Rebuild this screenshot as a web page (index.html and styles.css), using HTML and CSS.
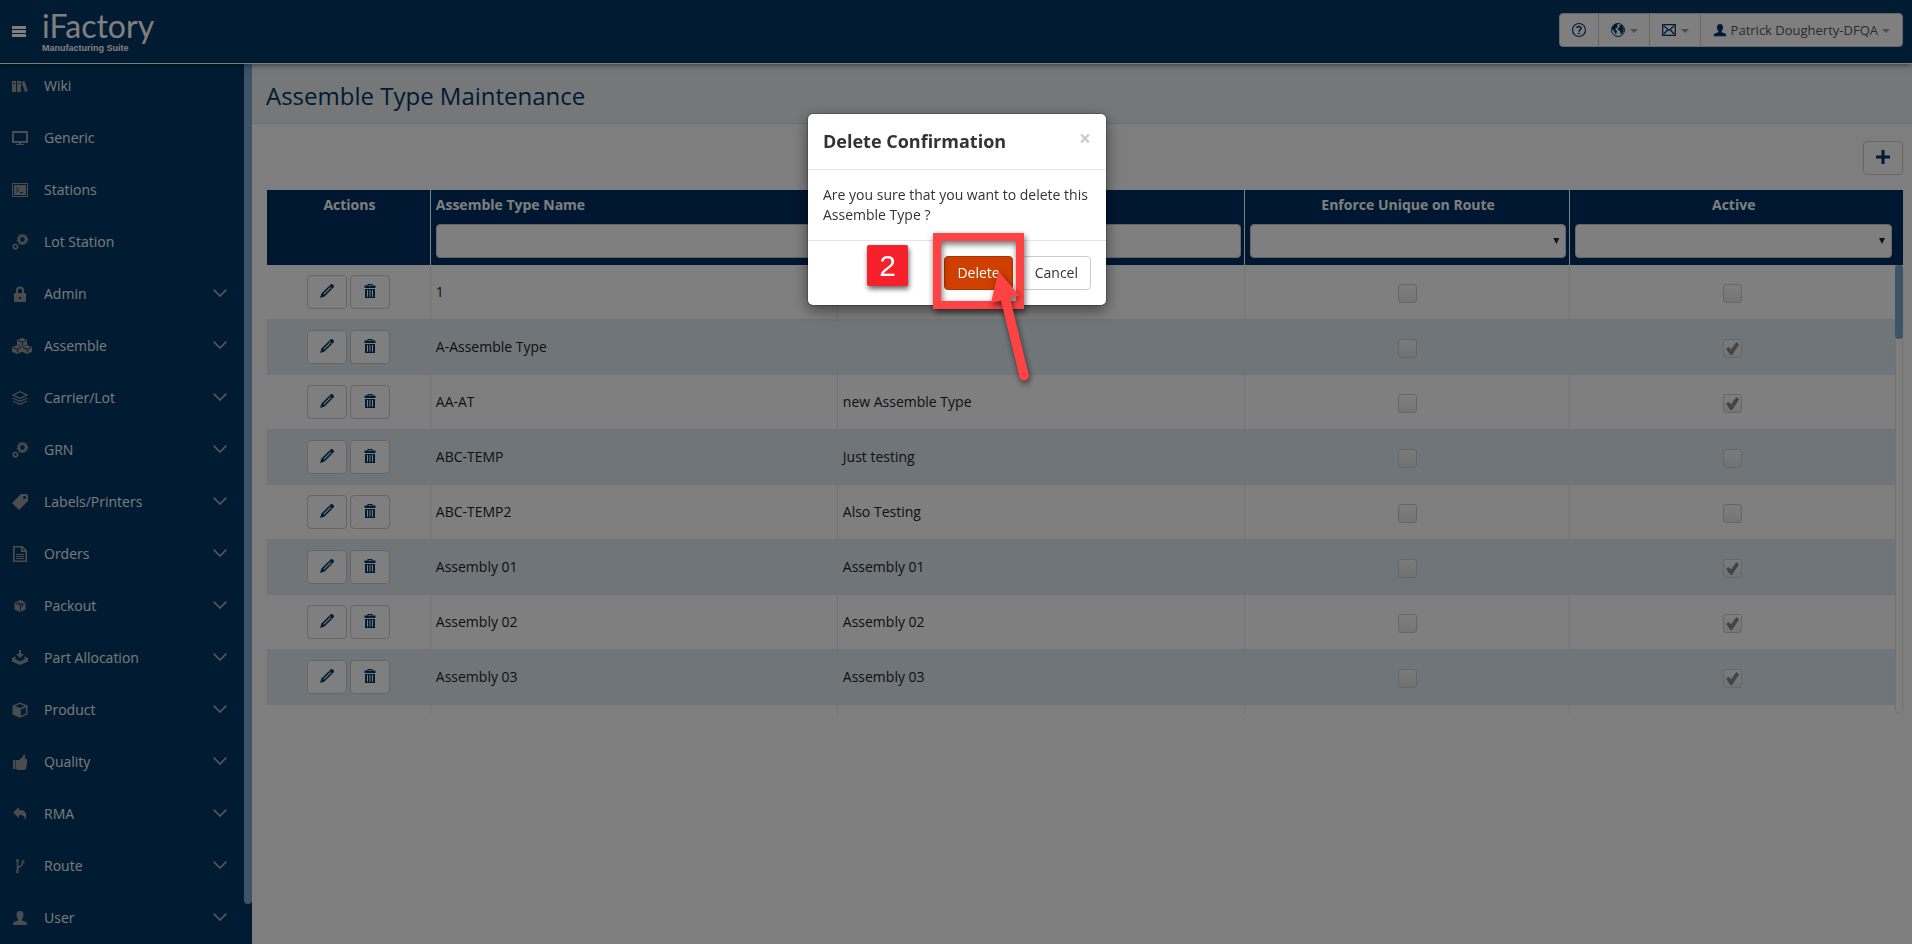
FILE: index.html
```html
<!DOCTYPE html>
<html lang="en">
<head>
<meta charset="utf-8">
<title>Assemble Type Maintenance</title>
<link rel="stylesheet" href="styles.css">
</head>
<body>
<svg class="sprite" aria-hidden="true">
  <symbol id="books" viewBox="0 0 16 16"><path d="M0 3h4v11H0zM5 3h4v11H5zM9.500 4l3-1 3.500 10-3 1z"/><path class="cut" d="M1 5h2v1H1zM6 5h2v1H6z"/></symbol>
  <symbol id="monitor" viewBox="0 0 16 16"><path d="M0 1h16v12H0zM2 3v8h12V3zM7 13h2v1h3v1H4v-1h3z" fill-rule="evenodd"/></symbol>
  <symbol id="terminal" viewBox="0 0 16 16"><path d="M0 1h16v14H0zM1 2v12h14V2zM2 3h12v10H2zM4 5v1l2 2-2 2v1l3-3zM8 10v1h3v-1z" fill-rule="evenodd"/></symbol>
  <symbol id="gears" viewBox="0 0 16 16"><circle cx="10.500" cy="5.500" r="3.500" fill="none" stroke="currentColor" stroke-width="2.200"/><circle cx="10.500" cy="5.500" r="5" fill="none" stroke="currentColor" stroke-width="1.300" stroke-dasharray="1.600 1.030"/><circle cx="3.400" cy="12.600" r="2" fill="none" stroke="currentColor" stroke-width="1.300"/><circle cx="3.400" cy="12.600" r="2.900" fill="none" stroke="currentColor" stroke-width="1" stroke-dasharray="1.200 1.070"/></symbol>
  <symbol id="lock" viewBox="0 0 16 16"><path d="M2 7h2V4.500a4 4 0 0 1 8 0V7h2v9H2zM6 7h4V4.500a2 2 0 0 0-4 0zM7 11v2h2v-2z" fill-rule="evenodd"/></symbol>
  <symbol id="cubes" viewBox="0 0 20 16"><path d="M10 0l5 2v4.500l-5 2.200-5-2.200V2zM5 7l5 2.300v4.400L5 16l-5-2.300V9.300zM15 7l5 2.300v4.400L15 16l-5-2.300V9.300z"/><path class="line" d="M6 2.500l4 1.700 4-1.700M10.500 7.300V4.500M1 9.600l4 1.800 4-1.800M5.500 14.500v-3M11 9.600l4 1.800 4-1.800M15.500 14.500v-3"/></symbol>
  <symbol id="layers" viewBox="0 0 16 16"><path d="M1 5l7-3.300L15 5 8 8.400zM1 8l7 3.400L15 8M1 11l7 3.400L15 11" fill="none" stroke="currentColor" stroke-width="1.200"/></symbol>
  <symbol id="tag" viewBox="0 0 16 16"><path d="M9 0h5a2 2 0 0 1 2 2v5l-9 9-7-7zM12.500 2a1.500 1.500 0 1 0 0 3 1.500 1.500 0 0 0 0-3z" fill-rule="evenodd"/></symbol>
  <symbol id="doc" viewBox="0 0 16 16"><path d="M1.800 .8h8.400l4 4v10.400H1.800zM9.800 1v4.200H14" fill="none" stroke="currentColor" stroke-width="1.600"/><path d="M4 8h8v1H4zM4 10h8v1H4zM4 12h8v1H4z"/></symbol>
  <symbol id="package" viewBox="0 0 16 16"><path d="M8 2l5.500 2.500v7L8 14l-5.500-2.500v-7z"/><path class="line" d="M3 5l5 2.300L13.500 5M8.500 7v6M5 3.800l5.500 2.500V9"/></symbol>
  <symbol id="inbox" viewBox="0 0 16 16"><path d="M7 0h2v4h3L8 8 4 4h3z"/><path d="M4 6.500L0 8v3.500L8 15l8-3.500V8l-4-1.500v1.300l1.500 1L8 11.500 2.500 8.800 4 7.800z"/></symbol>
  <symbol id="cube" viewBox="0 0 16 16"><path d="M8 .5l7.500 3v9L8 15.700.5 12.500v-9zM8 2L3 4l5 2 5-2zM8.800 7.500v6.400l5.200-2.300V5.300z" fill-rule="evenodd"/></symbol>
  <symbol id="thumb" viewBox="0 0 16 16"><path d="M1 6h2v9H1zM3.500 6H7l3.500-3L12 0l1 1v4h2v4l-1 6-2 1H6l-2.500-1z"/></symbol>
  <symbol id="reply" viewBox="0 0 16 16"><path d="M7 1v3c6 0 9 3 6 11 .5-5-2-6-6-6v3L1 6.500z"/></symbol>
  <symbol id="fork" viewBox="0 0 16 16"><path d="M5.500 3.500v9M5.500 11c0-3 5-2 5-6" fill="none" stroke="currentColor" stroke-width="1.500"/><path d="M4.500 1.700h2v2h-2zM4.500 12.500h2v2h-2zM10 2.700h2v2h-2z" fill="none" stroke="currentColor"/></symbol>
  <symbol id="person" viewBox="0 0 16 16"><path d="M8 1c2.500 0 3.500 1.600 3.500 4 0 2-1 3-1.500 4v1.500l4 1.500c1 .5 1 1.500 1 3H1c0-1.500 0-2.500 1-3l4-1.500V9c-.5-1-1.500-2-1.500-4 0-2.400 1-4 3.500-4z"/></symbol>
  <symbol id="down" viewBox="0 0 14 8"><path d="M.7 .7L7 7 13.300 .7" fill="none" stroke="currentColor" stroke-width="1.700"/></symbol>
  <symbol id="help" viewBox="0 0 16 16"><circle cx="8" cy="8" r="6.500" fill="none" stroke="currentColor" stroke-width="1.200"/><path d="M5.700 6C6 3.900 10.300 4 10 6.500 9.700 8 8 7.700 8 9.700" fill="none" stroke="currentColor" stroke-width="1.500"/><path d="M7.200 10.700h1.600v1.600H7.200z"/></symbol>
  <symbol id="globe" viewBox="0 0 16 16"><circle cx="8" cy="8" r="6.500" fill="none" stroke="currentColor" stroke-width="1"/><path d="M2 5l3-3 3-.5L7 4l1 1-3 2 2 2-1 4-2-4-2-2zM9 3l3 0 2 4-1 1 1 1-3 4-1-4-2-1V6l2-1z"/></symbol>
  <symbol id="mail" viewBox="0 0 16 16"><path d="M1.700 2.700h12.600v10.600H1.700zM3 4l5 4.500L13 4M3 12l3.500-4M13 12L9.500 8" fill="none" stroke="currentColor" stroke-width="1.300"/></symbol>
  <symbol id="plus" viewBox="0 0 16 16"><path d="M6.500 1h3v5.500H15v3H9.500V15h-3V9.500H1v-3h5.500z"/></symbol>
  <symbol id="pencil" viewBox="0 0 14 14"><path d="M11 0c2 0 3 1 3 3L4.500 12.500 0 14l1.500-4.500z"/><path d="M3.700 10.300l6.500-6.500" fill="none" stroke="#fff" stroke-width="1.100"/><path d="M9.200 2l2.800 2.800" fill="none" stroke="#fff" stroke-width=".6"/></symbol>
  <symbol id="trash" viewBox="0 0 14 14"><path d="M4.500 0h5v1.500h3V4h-11V1.500h3zM5.500 1v.7h3V1zM2 5h10v9H2zM4 6v6.700h1V6zM6.500 6v6.700h1V6zM9 6v6.700h1V6z" fill-rule="evenodd"/></symbol>
</svg>

<header class="topbar">
  <button class="burger" aria-label="Toggle menu"><span></span><span></span><span></span></button>
  <a class="logo" href="#"><span class="logo-name">iFactory</span><span class="logo-sub">Manufacturing Suite</span></a>
  <div class="tools">
    <button aria-label="Help"><svg class="icon"><use href="#help"/></svg></button>
    <button aria-label="Language"><svg class="icon"><use href="#globe"/></svg><i class="caret"></i></button>
    <button aria-label="Messages"><svg class="icon"><use href="#mail"/></svg><i class="caret"></i></button>
    <button class="account"><svg class="icon"><use href="#person"/></svg><span>Patrick Dougherty-DFQA</span><i class="caret"></i></button>
  </div>
</header>

<div class="shell">
  <nav class="sidebar">
    <ul class="menu">
      <li><a href="#"><svg class="icon"><use href="#books"/></svg>Wiki</a></li>
      <li><a href="#"><svg class="icon"><use href="#monitor"/></svg>Generic</a></li>
      <li><a href="#"><svg class="icon"><use href="#terminal"/></svg>Stations</a></li>
      <li><a href="#"><svg class="icon"><use href="#gears"/></svg>Lot Station</a></li>
      <li><a href="#"><svg class="icon"><use href="#lock"/></svg>Admin<svg class="down"><use href="#down"/></svg></a></li>
      <li><a href="#"><svg class="icon wide"><use href="#cubes"/></svg>Assemble<svg class="down"><use href="#down"/></svg></a></li>
      <li><a href="#"><svg class="icon"><use href="#layers"/></svg>Carrier/Lot<svg class="down"><use href="#down"/></svg></a></li>
      <li><a href="#"><svg class="icon"><use href="#gears"/></svg>GRN<svg class="down"><use href="#down"/></svg></a></li>
      <li><a href="#"><svg class="icon"><use href="#tag"/></svg>Labels/Printers<svg class="down"><use href="#down"/></svg></a></li>
      <li><a href="#"><svg class="icon"><use href="#doc"/></svg>Orders<svg class="down"><use href="#down"/></svg></a></li>
      <li><a href="#"><svg class="icon"><use href="#package"/></svg>Packout<svg class="down"><use href="#down"/></svg></a></li>
      <li><a href="#"><svg class="icon"><use href="#inbox"/></svg>Part Allocation<svg class="down"><use href="#down"/></svg></a></li>
      <li><a href="#"><svg class="icon"><use href="#cube"/></svg>Product<svg class="down"><use href="#down"/></svg></a></li>
      <li><a href="#"><svg class="icon"><use href="#thumb"/></svg>Quality<svg class="down"><use href="#down"/></svg></a></li>
      <li><a href="#"><svg class="icon"><use href="#reply"/></svg>RMA<svg class="down"><use href="#down"/></svg></a></li>
      <li><a href="#"><svg class="icon"><use href="#fork"/></svg>Route<svg class="down"><use href="#down"/></svg></a></li>
      <li><a href="#"><svg class="icon"><use href="#person"/></svg>User<svg class="down"><use href="#down"/></svg></a></li>
    </ul>
    <div class="side-scroll"><div class="side-thumb"></div></div>
  </nav>

  <main class="content">
    <h1 class="page-title">Assemble Type Maintenance</h1>
    <div class="panel">
      <div class="actions-bar"><button class="btn square" aria-label="Add"><svg class="icon"><use href="#plus"/></svg></button></div>
      <div class="grid-head">
        <table class="grid">
          <colgroup><col class="c-act"><col class="c-text"><col class="c-text"><col class="c-flag"><col class="c-flag"></colgroup>
          <thead>
            <tr>
              <th class="center">Actions</th>
              <th><label for="f-name">Assemble Type Name</label><input class="filter" id="f-name" type="text"></th>
              <th><label for="f-desc"></label><input class="filter" id="f-desc" type="text" aria-label="Description"></th>
              <th class="center"><label for="f-unique">Enforce Unique on Route</label><span class="pick"><select class="filter" id="f-unique"><option></option></select></span></th>
              <th class="center"><label for="f-active">Active</label><span class="pick"><select class="filter" id="f-active"><option></option></select></span></th>
            </tr>
          </thead>
        </table>
      </div>
      <div class="grid-body">
        <div class="grid-view">
        <table class="grid">
          <colgroup><col class="c-act"><col class="c-text"><col class="c-text"><col class="c-flag"><col class="c-flag"></colgroup>
          <tbody id="rows"></tbody>
        </table>
        </div>
        <div class="grid-scroll"><div class="grid-thumb"></div></div>
      </div>
    </div>
  </main>
</div>

<div class="backdrop">
  <div class="dialog" role="dialog" aria-labelledby="dialog-title">
    <div class="dialog-head"><h2 id="dialog-title">Delete Confirmation</h2><button class="close" aria-label="Close">×</button></div>
    <p class="dialog-text">Are you sure that you want to delete this Assemble Type ?</p>
    <div class="dialog-foot"><button class="btn danger">Delete</button><button class="btn">Cancel</button></div>
    <div class="step">2</div>
    <div class="marker"></div>
    <svg class="arrow" viewBox="0 0 50 120" aria-hidden="true"><path d="M18.500 9L39 33.500l-9 2.500L48.700 112.500a4.700 4.700 0 0 1-9.200 2.300L21 38.500 11 41z"/></svg>
  </div>
</div>
<script src="grid.js"></script>
</body>
</html>
```

FILE: grid.js
```js
const rows = [
  ["1", "", false],
  ["A-Assemble Type", "", true],
  ["AA-AT", "new Assemble Type", true],
  ["ABC-TEMP", "Just testing", false],
  ["ABC-TEMP2", "Also Testing", false],
  ["Assembly 01", "Assembly 01", true],
  ["Assembly 02", "Assembly 02", true],
  ["Assembly 03", "Assembly 03", true],
  ["", "", null]
];
const tick = (on, label) =>
  `<input class="tick" type="checkbox" disabled aria-label="${label}"${on ? " checked" : ""}>`;
document.getElementById("rows").innerHTML = rows.map(([name, text, active]) =>
  active === null
    ? "<tr><td></td><td></td><td></td><td></td><td></td></tr>"
    : `<tr>
  <td><div class="pair">
    <button class="btn square" aria-label="Edit"><svg class="icon"><use href="#pencil"/></svg></button>
    <button class="btn square" aria-label="Remove"><svg class="icon"><use href="#trash"/></svg></button>
  </div></td>
  <td>${name}</td><td>${text}</td>
  <td>${tick(false, "Enforce unique")}</td><td>${tick(active, "Active")}</td></tr>`
).join("");
```

FILE: styles.css
```css
* { box-sizing: border-box; }
body {
  margin: 0;
  height: 100vh;
  display: flex;
  flex-direction: column;
  overflow: hidden;
  background: #fdfdfd;
  color: #333;
  font: 14px/20px "Open Sans", sans-serif;
}
button, input, select { font: inherit; color: inherit; }
button { cursor: pointer; }
.sprite { position: absolute; width: 0; height: 0; }
.icon { width: 16px; height: 16px; fill: currentColor; flex: none; }
.cut { fill: #003764; }
.line { fill: none; stroke: #003764; stroke-width: 1; }

.topbar {
  position: relative;
  z-index: 1;
  flex: none;
  height: 64px;
  display: flex;
  align-items: center;
  padding: 0 9px 0 12px;
  background: #003764;
  border-bottom: 1px solid #fff;
  box-shadow: 0 1px 6px rgba(0, 0, 0, .5);
}
.burger {
  display: grid;
  gap: 1px;
  width: 14px;
  padding: 0;
  border: 0;
  background: none;
}
.burger span { height: 3px; background: #fff; }
.logo {
  display: flex;
  flex-direction: column;
  margin-left: 16px;
  color: #fff;
  text-decoration: none;
}
.logo-name { font: 32px/32px Lato, sans-serif; }
.logo-sub { font: 700 9px/12px "Liberation Sans", sans-serif; }
.tools {
  display: flex;
  height: 34px;
  margin: 0 0 4px auto;
  background: #fff;
  border: 1px solid #ccc;
  border-radius: 4px;
}
.tools button {
  display: flex;
  align-items: center;
  gap: 4px;
  padding: 0 11px;
  border: 0;
  border-right: 1px solid #ccc;
  background: none;
  color: #003764;
}
.tools button:last-child { border-right: 0; }
.tools .account { padding: 0 12px; }
.account .icon { width: 14px; height: 14px; }
.account span { color: #555; font-size: 13px; }
.caret {
  margin-top: 3px;
  border: 4px solid transparent;
  border-top-color: #99a;
  border-bottom: 0;
}

.shell { flex: 1; min-height: 0; display: flex; }
.sidebar {
  flex: none;
  width: 252px;
  display: flex;
  overflow: hidden;
  background: #003764;
  color: #f4f4f4;
}
.menu { flex: 1; margin: 0; padding: 0; list-style: none; }
.menu a {
  display: flex;
  align-items: center;
  height: 52px;
  padding: 0 17px 8px 12px;
  color: inherit;
  text-decoration: none;
}
.menu .icon { margin-right: 16px; color: #999; }
.menu .wide { width: 20px; margin-right: 12px; }
.down { width: 14px; height: 8px; margin: 0 0 2px auto; color: #aaa; }
.side-scroll { width: 8px; padding-bottom: 40px; }
.side-thumb { height: 100%; background: #7aa6cc; border-radius: 0 0 4px 4px; }

.content { flex: 1; min-width: 0; }
.page-title {
  margin: 0;
  padding: 16px 14px 11px;
  background: #eceef2;
  border-bottom: 1px solid #dcdcdc;
  color: #003764;
  font-size: 24px;
  line-height: 32px;
  font-weight: 400;
}
.panel { padding: 17px 9px 0 15px; }
.actions-bar { display: flex; justify-content: flex-end; margin-bottom: 15px; }

.btn {
  height: 34px;
  padding: 0 12px;
  border: 1px solid #ccc;
  border-radius: 4px;
  background: #fff;
}
.square {
  width: 40px;
  padding: 0 0 2px;
  display: grid;
  place-items: center;
  color: #003764;
}

.grid { width: 100%; table-layout: fixed; border-collapse: separate; border-spacing: 0; }
.c-act { width: 10%; }
.c-text { width: 25%; }
.c-flag { width: 20%; }
.grid-head { padding-right: 8px; background: #002e62; color: #fff; }
.grid th {
  height: 75px;
  padding: 5px 3px 7px 5px;
  border-left: 1px solid #fff;
  text-align: left;
  vertical-align: top;
}
.grid th:first-child { border-left: 0; }
.grid .center { text-align: center; }
.grid label { display: block; min-height: 20px; margin-bottom: 9px; }
.filter {
  display: block;
  width: 100%;
  height: 34px;
  padding: 0 12px;
  border: 1px solid #ccc;
  border-radius: 4px;
  background: #fff;
  color: #333;
  appearance: none;
}
.pick { display: grid; align-items: center; }
.pick::after {
  content: "";
  width: 6px;
  height: 6px;
  background: #222;
  clip-path: polygon(0 0, 100% 0, 50% 100%);
  justify-self: end;
  margin-right: 7px;
  pointer-events: none;
}
.pick > *, .pick::after { grid-area: 1 / 1; }
.grid-body { display: flex; height: 449px; overflow: hidden; }
.grid-view { flex: 1; min-width: 0; }
.grid td {
  height: 55px;
  padding: 0 5px;
  border-left: 1px solid #e6e6e6;
  border-bottom: 1px solid #e4e7ea;
  background: #fff;
  color: #222;
}
.grid td:first-child { border-left: 0; }
.grid tr:nth-child(even) td { background: #dfebf3; }
.grid td:nth-child(n+4) { text-align: center; }
.pair { display: flex; justify-content: center; gap: 3px; }
.pair .icon { width: 14px; height: 14px; }
.tick {
  appearance: none;
  display: inline-grid;
  place-items: center;
  width: 19px;
  height: 19px;
  margin: 2px 0 0;
  border: 1px solid #ccc;
  border-radius: 3px;
  background: linear-gradient(rgba(252, 252, 252, .7), rgba(225, 225, 225, .7));
  vertical-align: middle;
}
.tick:checked::after {
  content: "";
  width: 13px;
  height: 13px;
  background: #888;
  clip-path: polygon(0 55%, 16% 40%, 38% 56%, 78% 0, 100% 18%, 46% 100%, 32% 100%);
}
.grid-scroll { width: 8px; border: 1px solid #e2e2e2; border-radius: 0 0 4px 4px; background: #fff; }
.grid-thumb { height: 74px; margin: -1px; background: #7aa6cc; border-radius: 4px; }

.backdrop {
  position: fixed;
  inset: 0;
  z-index: 10;
  display: flex;
  justify-content: center;
  align-items: flex-start;
  padding: 114px 0 0 2px;
  background: rgba(0, 0, 0, .5);
}
.dialog {
  position: relative;
  width: 298px;
  border-radius: 5px;
  background: #fff;
  box-shadow: 0 0 0 1px rgba(0, 0, 0, .2), 0 5px 15px rgba(0, 0, 0, .5);
}
.dialog-head {
  display: flex;
  justify-content: space-between;
  padding: 15px;
  border-bottom: 1px solid #e5e5e5;
}
.dialog-head h2 { margin: 0; font-size: 18px; line-height: 25px; font-weight: 700; }
.close {
  height: 18px;
  padding: 0;
  border: 0;
  background: none;
  color: #ccc;
  font-size: 21px;
  line-height: 16px;
  font-weight: 700;
}
.dialog-text { margin: 0; padding: 15px; }
.dialog-foot {
  display: flex;
  justify-content: flex-end;
  gap: 9px;
  padding: 15px;
  border-top: 1px solid #e5e5e5;
}
.danger { background: #cf3f00; border-color: #a83300; color: #fff; }

/* Tutorial call-outs laid over the dialog */
.step {
  position: absolute;
  left: 59px;
  top: 131px;
  width: 41px;
  height: 41px;
  border-radius: 2px;
  background: #f6202a;
  color: #fff;
  box-shadow: 1px 3px 5px rgba(0, 0, 0, .6);
  font: 30px/41px "Liberation Sans", sans-serif;
  text-align: center;
}
.marker {
  position: absolute;
  left: 125px;
  top: 119px;
  width: 91px;
  height: 76px;
  border: 8px solid #ff4345;
  filter: drop-shadow(1px 3px 3px rgba(0, 0, 0, .6));
}
.arrow {
  position: absolute;
  left: 172px;
  top: 148px;
  width: 50px;
  height: 120px;
  overflow: visible;
  fill: #ff4345;
  filter: drop-shadow(1px 3px 3px rgba(0, 0, 0, .6));
}
```
